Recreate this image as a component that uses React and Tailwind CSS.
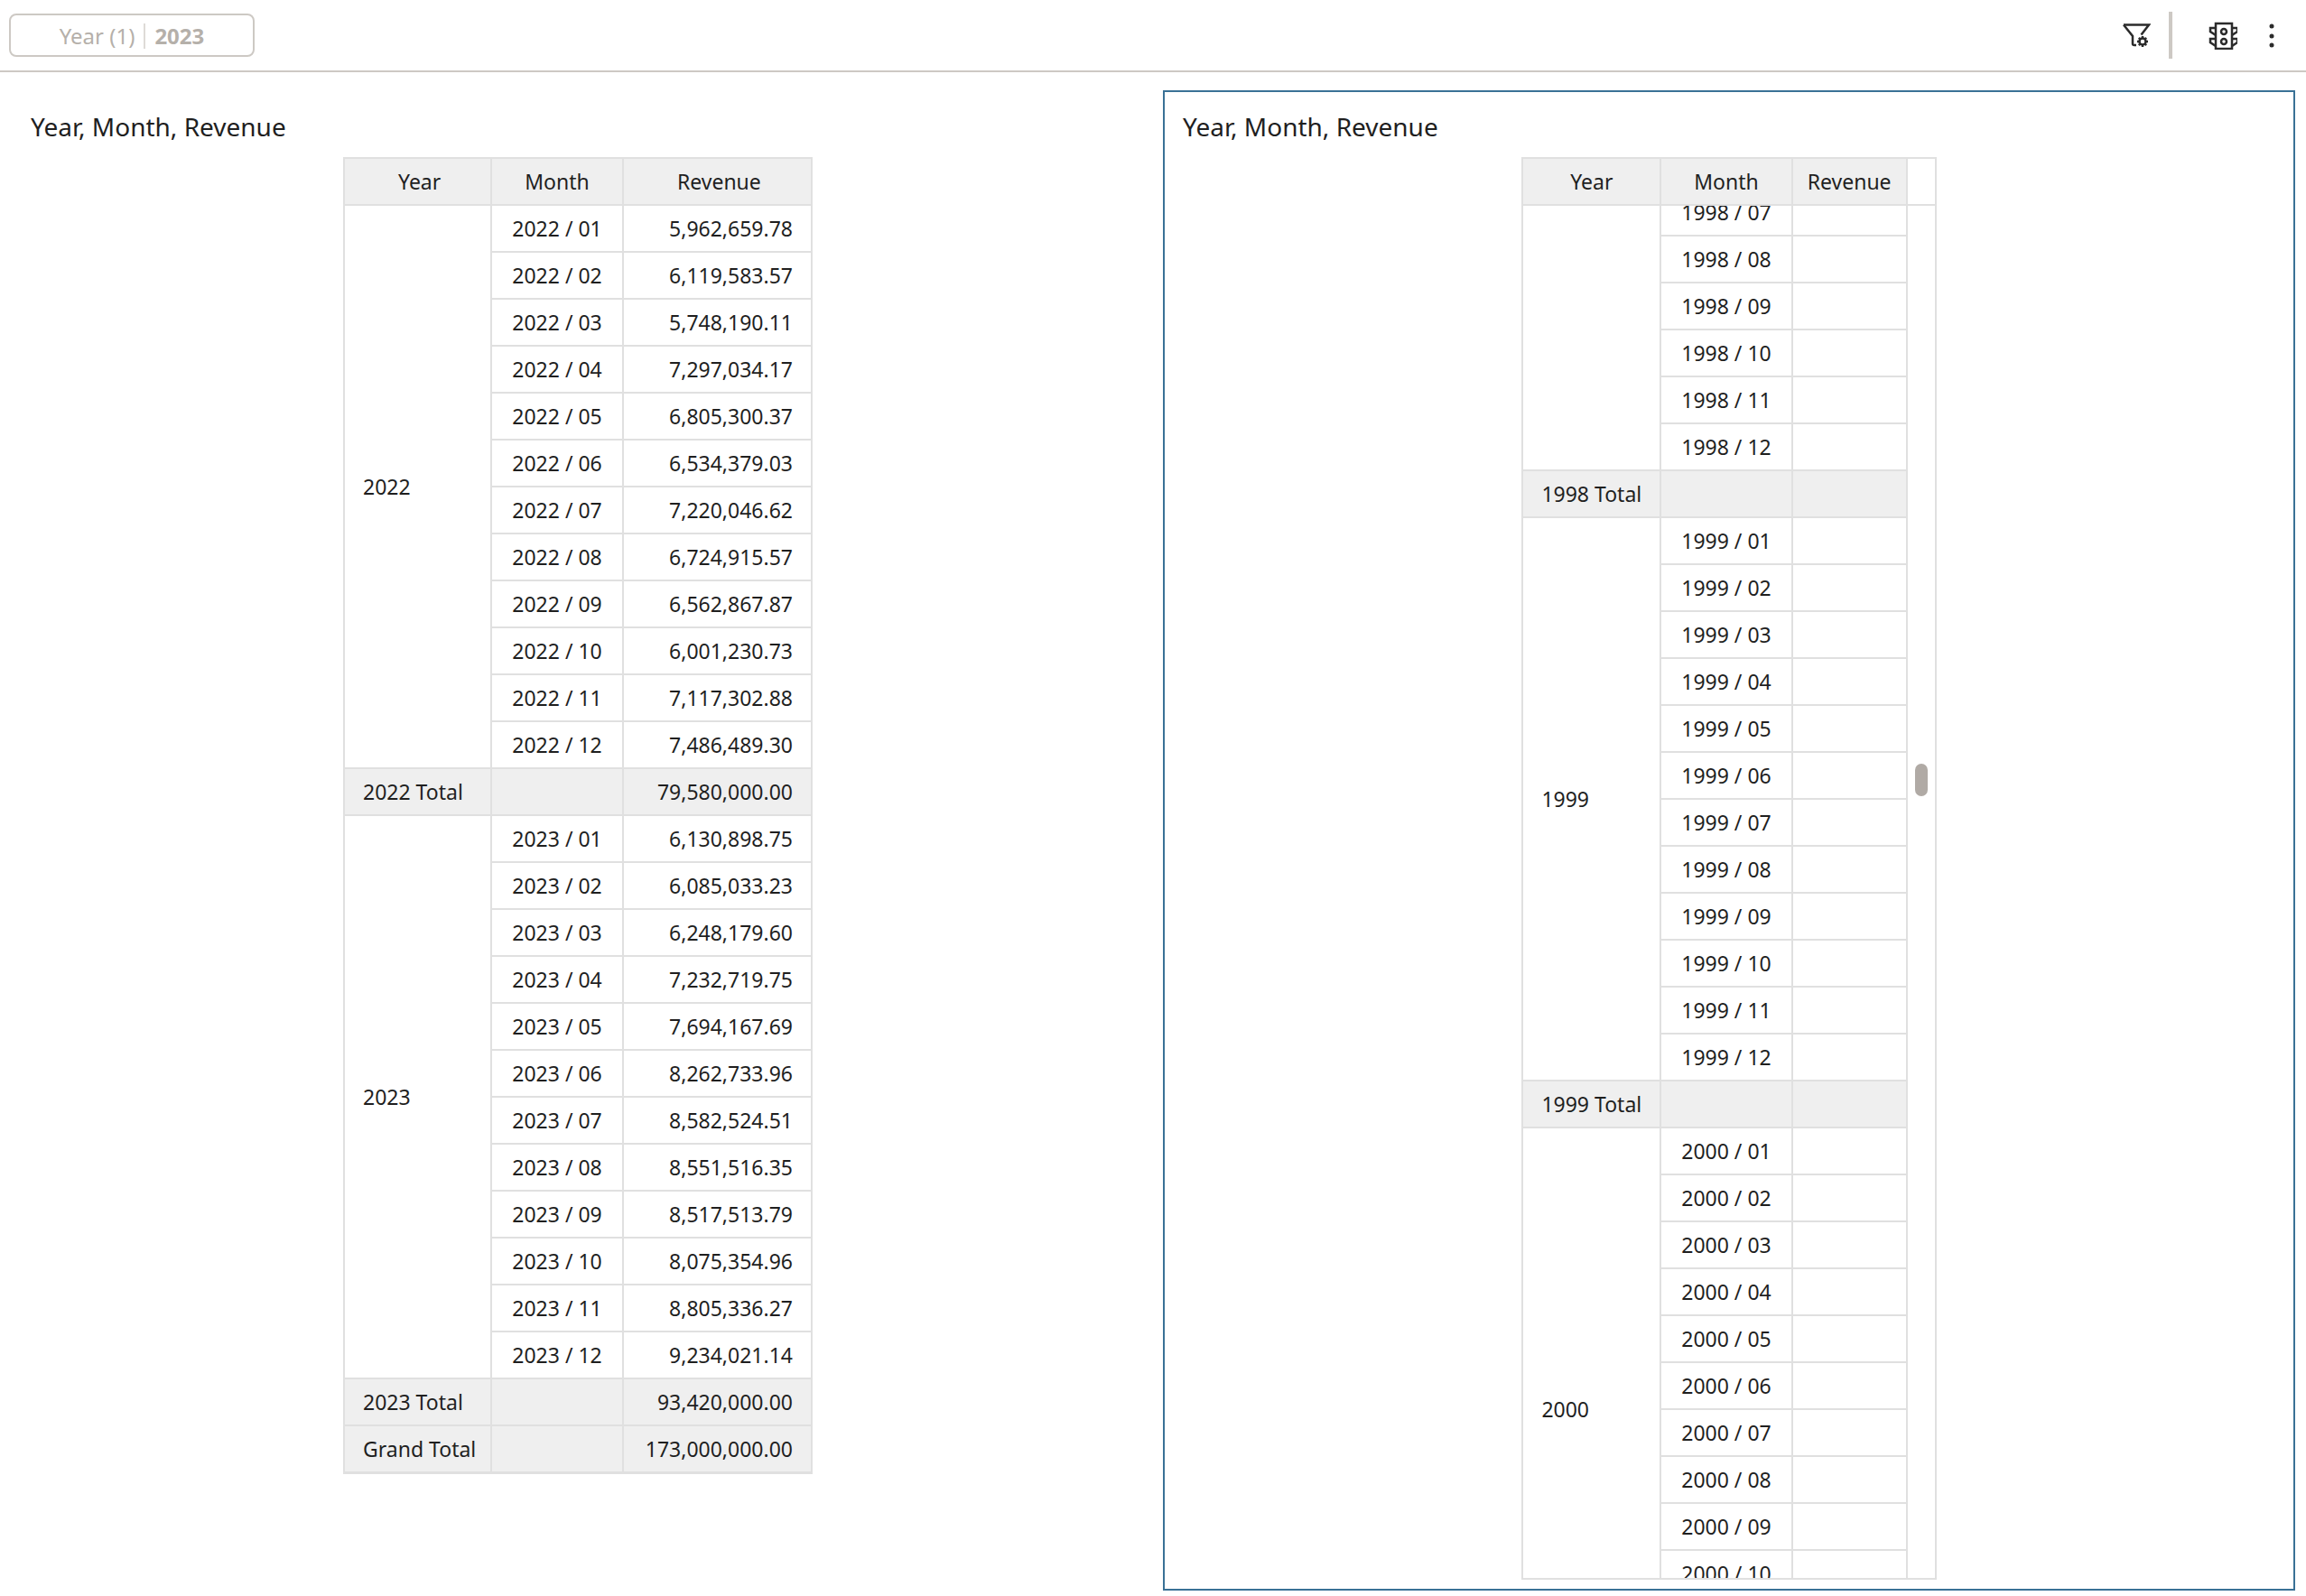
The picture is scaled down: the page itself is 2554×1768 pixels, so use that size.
import { useEffect, useRef } from "react";

const MONTHS = ["01", "02", "03", "04", "05", "06", "07", "08", "09", "10", "11", "12"];

const revenue = {
  2022: ["5,962,659.78", "6,119,583.57", "5,748,190.11", "7,297,034.17", "6,805,300.37", "6,534,379.03", "7,220,046.62", "6,724,915.57", "6,562,867.87", "6,001,230.73", "7,117,302.88", "7,486,489.30"],
  2023: ["6,130,898.75", "6,085,033.23", "6,248,179.60", "7,232,719.75", "7,694,167.69", "8,262,733.96", "8,582,524.51", "8,551,516.35", "8,517,513.79", "8,075,354.96", "8,805,336.27", "9,234,021.14"],
};

const cell = "h-13 border-r-2 border-b-2 border-[#e0e0e0] font-normal";
const head = "h-13.5 border-t-2 border-r-2 border-b-2 border-[#e0e0e0] bg-[#efefef] text-center font-normal";

// column paddings differ a little between the two tables
const leftCols = { year: "pr-4 pl-5", month: "px-5.5", rev: "pr-5 pl-6" };
const rightCols = { year: "px-5", month: "px-5.5", rev: "px-4" };

function FilterIcon() {
  return (
    <svg viewBox="0 0 32 32" className="h-8 w-8" fill="none" stroke="#2b2b2b" strokeWidth="2.5">
      <path d="M2 4.5h28L21.5 15.5" />
      <path d="M2 4.5l10 12.5v8.5q0 1.5 2 1.5h2" />
      <circle cx="23" cy="23" r="3.5" />
      <path d="M23 17v2.5M23 26.5V29M17 23h2.5M26.5 23H29M18.8 18.8l1.8 1.8M25.4 25.4l1.8 1.8M27.2 18.8l-1.8 1.8M20.6 25.4l-1.8 1.8" />
    </svg>
  );
}

function SignalIcon() {
  return (
    <svg viewBox="0 0 32 32" className="h-8 w-8" fill="none" stroke="#2b2b2b" strokeWidth="2.5">
      <rect x="8" y="3" width="18" height="28" />
      <circle cx="17" cy="12" r="3" />
      <circle cx="17" cy="23" r="3" />
      <path d="M8 8H2v4l6 4M8 20H2v4l6 4M26 8h6v4l-6 4M26 20h6v4l-6 4" />
    </svg>
  );
}

function KebabIcon() {
  return (
    <svg viewBox="0 0 12 32" className="h-8 w-3" fill="#2b2b2b">
      <circle cx="6" cy="6" r="2.5" />
      <circle cx="6" cy="17" r="2.5" />
      <circle cx="6" cy="27" r="2.5" />
    </svg>
  );
}

function YearRows({ year, values, total, gutter, cols }) {
  return (
    <>
      {MONTHS.map((m, i) => (
        <tr key={m}>
          {i === 0 && (
            <td rowSpan={12} className={`${cell} ${cols.year}`}>
              {year}
            </td>
          )}
          <td className={`${cell} ${cols.month} text-center`}>
            {year} / {m}
          </td>
          <td className={`${cell} ${cols.rev} text-right`}>{values ? values[i] : ""}</td>
          {gutter && <td className="border-r-2 border-[#e0e0e0]" />}
        </tr>
      ))}
      <tr className="bg-[#efefef]">
        <td className={`${cell} ${cols.year}`}>{year} Total</td>
        <td className={`${cell} ${cols.month}`} />
        <td className={`${cell} ${cols.rev} text-right`}>{total}</td>
        {gutter && <td className="border-r-2 border-[#e0e0e0] bg-white" />}
      </tr>
    </>
  );
}

function TableHead({ gutter, cols }) {
  return (
    <thead className="sticky top-0">
      <tr>
        <th className={`${head} ${cols.year}`}>Year</th>
        <th className={`${head} ${cols.month}`}>Month</th>
        <th className={`${head} ${cols.rev}`}>Revenue</th>
        {gutter && <th className="w-8 border-t-2 border-r-2 border-b-2 border-[#e0e0e0] bg-white" />}
      </tr>
    </thead>
  );
}

function LeftPanel() {
  return (
    <section className="flex w-320 flex-col border-2 border-transparent">
      <h2 className="mt-5 mb-4 pl-8 text-[28px] leading-9">Year, Month, Revenue</h2>
      <div className="mx-auto w-fit border-b border-l-2 border-[#e0e0e0]">
        <table className="border-separate border-spacing-0">
          <TableHead cols={leftCols} />
          <tbody>
            <YearRows year="2022" values={revenue[2022]} total="79,580,000.00" cols={leftCols} />
            <YearRows year="2023" values={revenue[2023]} total="93,420,000.00" cols={leftCols} />
            <tr className="bg-[#efefef]">
              <td className={`${cell} ${leftCols.year}`}>Grand Total</td>
              <td className={`${cell} ${leftCols.month}`} />
              <td className={`${cell} ${leftCols.rev} text-right`}>173,000,000.00</td>
            </tr>
          </tbody>
        </table>
      </div>
    </section>
  );
}

function RightPanel() {
  const scroller = useRef(null);

  useEffect(() => {
    scroller.current.scrollTop = 330;
  }, []);

  return (
    <section className="flex min-w-0 flex-1 flex-col border-2 border-[#3a7196] pb-2.5">
      <h2 className="mt-5 mb-4 pl-5 text-[28px] leading-9">Year, Month, Revenue</h2>
      <div className="relative mx-auto min-h-0 w-fit flex-1">
        <div ref={scroller} className="h-full overflow-hidden border-b-2 border-l-2 border-[#e0e0e0]">
          <table className="border-separate border-spacing-0">
            <TableHead gutter cols={rightCols} />
            <tbody>
              <YearRows year="1998" gutter cols={rightCols} />
              <YearRows year="1999" gutter cols={rightCols} />
              <YearRows year="2000" gutter cols={rightCols} />
            </tbody>
          </table>
        </div>
        <div className="absolute top-168 right-2.5 h-9 w-3.5 rounded-full bg-[#b0aaa5]" />
      </div>
    </section>
  );
}

export default function App() {
  return (
    <div className="flex h-screen flex-col overflow-hidden bg-white font-['Noto_Sans',sans-serif] text-[23px] text-[#1f1f1f]">
      {/* Toolbar */}
      <header className="flex h-20 shrink-0 items-center justify-between border-b-2 border-[#cdc9c4] pr-8 pl-2.5">
        <div className="flex h-12 w-68 items-center justify-center gap-2.5 rounded-lg border-2 border-[#cdc9c4] pt-0.5 text-2xl text-[#b5b0aa]">
          <span>Year (1)</span>
          <span className="h-7 w-0.5 bg-[#dedbd7]" />
          <span className="font-bold">2023</span>
        </div>
        <div className="flex items-center">
          <FilterIcon />
          <span className="ml-5 h-13 w-1 bg-[#cdc9c4]" />
          <span className="ml-10">
            <SignalIcon />
          </span>
          <span className="ml-8">
            <KebabIcon />
          </span>
        </div>
      </header>

      {/* Panels */}
      <main className="flex min-h-0 flex-1 gap-2 pt-5 pr-3 pb-1.5">
        <LeftPanel />
        <RightPanel />
      </main>
    </div>
  );
}
